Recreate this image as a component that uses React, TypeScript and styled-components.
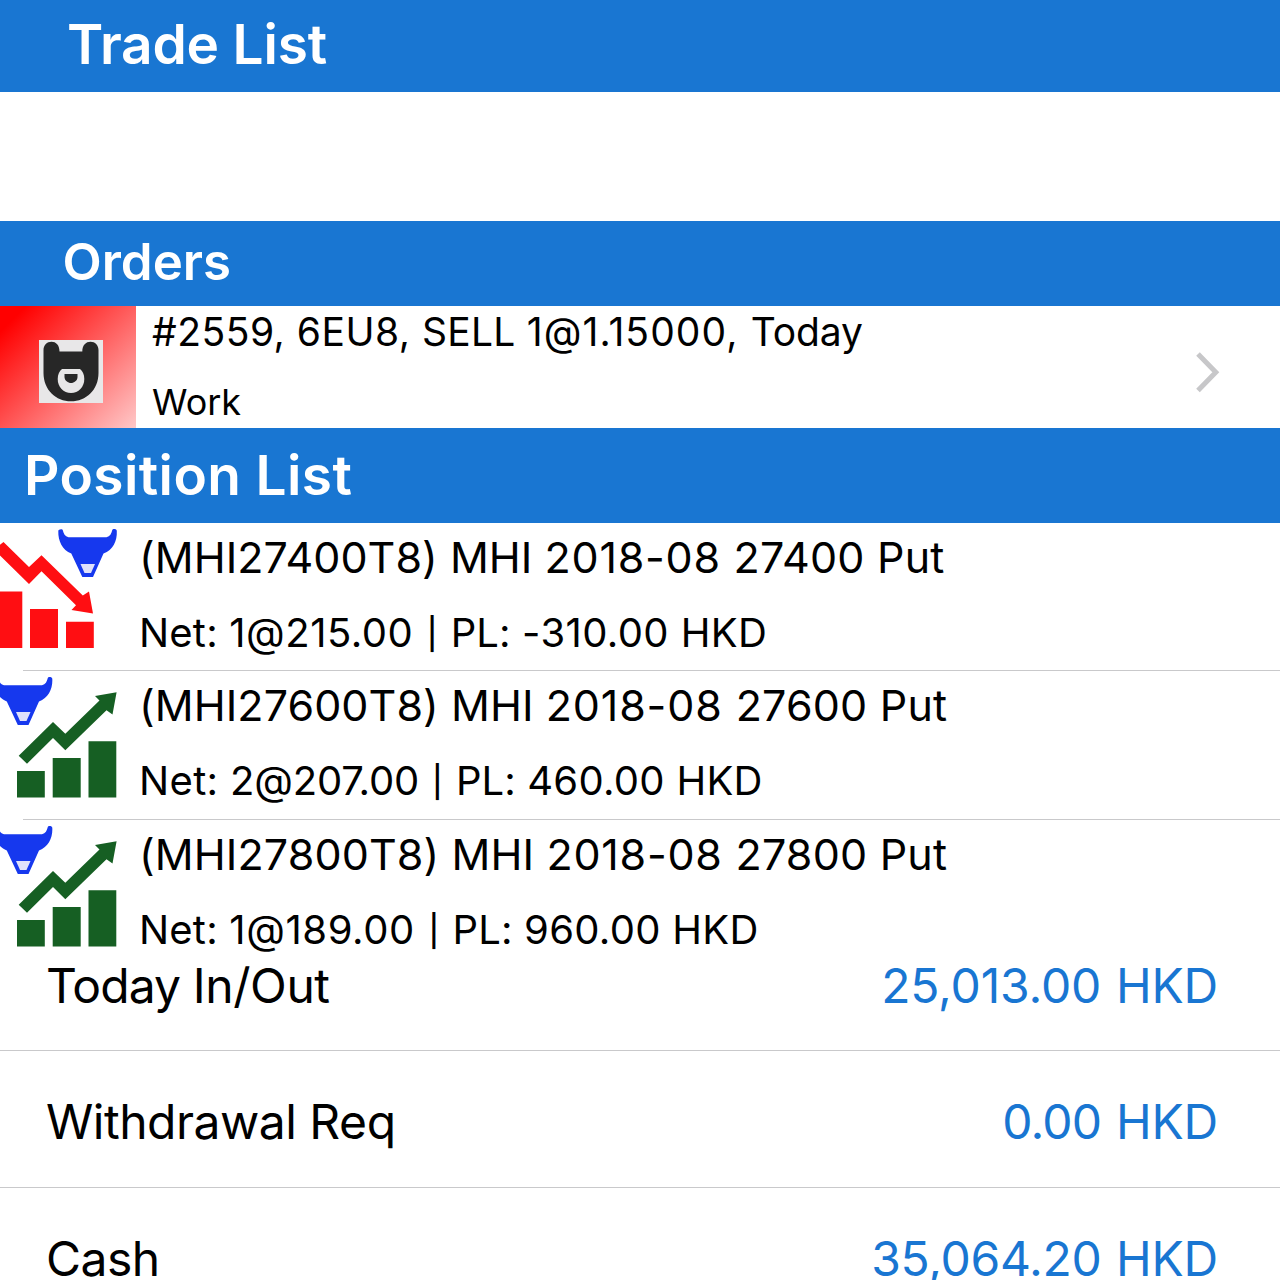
import React from "react";
import styled, { createGlobalStyle } from "styled-components";

const BLUE = "#1976d2";

const GlobalStyle = createGlobalStyle`
  * { box-sizing: border-box; }
  body { margin: 0; background: #fff; overflow: hidden; }
`;

const Screen = styled.main`
  display: flex;
  flex-direction: column;
  width: 1280px;
  height: 1280px;
  overflow: hidden;
  background: #fff;
  color: #000;
  font-family: Inter, "Liberation Sans", sans-serif;
  white-space: nowrap;
`;

const Header = styled.h2<{ $height: number; $left: number; $size: number; $spacing?: number; $lift?: number }>`
  display: flex;
  flex: none;
  align-items: center;
  height: ${(p) => p.$height}px;
  margin: 0;
  padding: 0 0 ${(p) => p.$lift ?? 0}px ${(p) => p.$left}px;
  background: ${BLUE};
  color: #fff;
  font-size: ${(p) => p.$size}px;
  font-weight: 600;
  letter-spacing: ${(p) => p.$spacing ?? 0}px;
`;

const EmptyTrades = styled.section`
  flex: none;
  height: 129px;
`;

const Line = styled.div<{ $size: number; $height: number; $spacing?: number }>`
  font-size: ${(p) => p.$size}px;
  line-height: ${(p) => p.$height}px;
  letter-spacing: ${(p) => p.$spacing ?? 0}px;
`;

const Run = styled.span<{ $spacing: number }>`
  letter-spacing: ${(p) => p.$spacing}px;
`;

const Bar = styled.span`
  display: inline-block;
  width: 14.500px;
  font-size: 31px;
  font-weight: 500;
  line-height: 1;
  text-align: center;
  vertical-align: 2px;
`;

const OrderRow = styled.section`
  display: flex;
  flex: none;
  height: 122px;
`;

const OrderBadge = styled.div`
  flex: none;
  width: 136px;
  padding: 34px 0 0 39px;
  background: linear-gradient(135deg, #ff0000 10%, #ffc8c8 100%);
`;

const OrderBody = styled.div`
  display: flex;
  flex: 1;
  flex-direction: column;
  gap: 18px;
  padding: 0 0 0 16px;
`;

const Chevron = styled.svg`
  flex: none;
  margin: 44px 57px 0 0;
`;

const PositionRow = styled.section<{ $height: number }>`
  display: flex;
  flex: none;
  height: ${(p) => p.$height}px;
`;

const PositionArt = styled.svg`
  flex: none;
  display: block;
`;

const PositionBody = styled.div`
  display: flex;
  flex: 1;
  flex-direction: column;
  gap: 23px;
  padding-top: 8px;
`;

const Divider = styled.hr<{ $inset?: number }>`
  flex: none;
  height: 1px;
  margin: 0 0 0 ${(p) => p.$inset ?? 0}px;
  border: 0;
  background: #c9c9cb;
`;

const CashRow = styled.section<{ $height: number; $top: number }>`
  display: flex;
  flex: none;
  justify-content: space-between;
  height: ${(p) => p.$height}px;
  padding: ${(p) => p.$top}px 62px 0 46px;
`;

const Amount = styled(Line)`
  color: ${BLUE};
`;

const Bull = ({ x }: { x: number }) => (
  <g transform={`translate(${x} 0)`}>
    <path
      d="M.3 8C.2 6 4.500 5.400 4.800 7.200C5.500 10.500 7 13.200 10.500 14.300H48.500C52 13.200 53.500 10.500 54.200 7.200C54.500 5.400 58.800 5.800 58.800 8C59.300 18 55 27 45.500 30.500L35 54H24.300L13.300 30.500C4.300 27 0 18 .3 8Z"
      fill="#1638ee"
    />
    <path d="M22.500 41H37L33 50H26.500Z" fill="#dfe1fb" />
  </g>
);

const LossArt = () => (
  <PositionArt width="139" height="147" viewBox="0 0 139 147" aria-hidden>
    <g fill="#ff0e12">
      <path d="M0 68.500H22.300V125H0ZM30 86H58V125H30ZM66 98.700H93.800V125H66Z" />
      <path d="M-2 23.500L3.500 19L29 44L41.500 32.200L82.800 72.500L89 68.500L93 90.500L71.500 87L76 82.300L41.500 48.300L29 61L-2 30.500Z" />
    </g>
    <Bull x={58} />
  </PositionArt>
);

const GainArt = () => (
  <PositionArt width="139" height="134" viewBox="0 0 139 134" aria-hidden>
    <g fill="#165f23">
      <path d="M17 100H44.800V126.500H17ZM52.700 87H80.700V126.500H52.700ZM88.500 70.300H116.300V126.500H88.500Z" />
      <path d="M18.700 84.700L53 51L65.300 62.800L99.500 29.500L95 25L116.600 21.300L112.500 43.500L106.500 39.300L65.300 79.300L53 67L27 92.700Z" />
    </g>
    <Bull x={-6.500} />
  </PositionArt>
);

const BearIcon = () => (
  <svg width="64" height="63" viewBox="0 0 64 63" aria-hidden>
    <path d="M0 0H64V63H0Z" fill="#e8e7e8" />
    <path
      d="M4.500 10C4.500 5 8 1.700 12.500 1.700C17 1.700 20.500 5 20.500 11.500H43.300C43.300 5 47 1.700 51.500 1.700C56 1.700 59.500 5 59.500 10V33C59.500 50 47 61.300 32 61.300S4.500 50 4.500 33Z"
      fill="#272727"
    />
    <path d="M23 29H41C43.500 31 45.300 34.500 45.300 39C45.300 47 39.500 53 32 53S18.700 47 18.700 39C18.700 34.500 20.500 31 23 29Z" fill="#e8e7e8" />
    <path d="M25.500 34H38.500V37C38.500 40.500 35 43 32 43S25.500 40.500 25.500 37Z" fill="#272727" />
  </svg>
);

type TextRun = [text: string, spacing: number];

const Runs = ({ runs }: { runs: TextRun[] }) => (
  <>
    {runs.map(([text, spacing], i) =>
      text === "|" ? <Bar key={i}>|</Bar> : <Run key={i} $spacing={spacing}>{text}</Run>,
    )}
  </>
);

const order: TextRun[] = [["#2559, ", 0.5], ["6EU8, ", 0.5], ["SELL ", 0.25], ["1@1.15000, ", 1.1], ["Today", -0.1]];

const positions: { title: TextRun[]; detail: TextRun[]; gain: boolean }[] = [
  {
    title: [["(MHI27400T8) MHI ", 0.05], ["2018-08 ", 0.75], ["27400 ", 0.2], ["Put", 0.2]],
    detail: [["Net: ", 0.2], ["1@215.00 ", 0.5], ["|", 0], [" PL: ", 0.1], ["-310.00 ", 0.4], ["HKD", 0.4]],
    gain: false,
  },
  {
    title: [["(MHI27600T8) MHI ", 0.08], ["2018-08 ", 0.85], ["27600 ", 0.2], ["Put", 0.2]],
    detail: [["Net: ", 0.35], ["2@207.00 ", -0.2], ["|", 0], [" PL: ", 0.1], ["460.00 ", 0.3], ["HKD", 0.3]],
    gain: true,
  },
  {
    title: [["(MHI27800T8) MHI ", 0.12], ["2018-08 ", 0.75], ["27800 ", 0.2], ["Put", 0.2]],
    detail: [["Net: ", 0.2], ["1@189.00 ", 0.6], ["|", 0], [" PL: ", 0.15], ["960.00 ", 0.3], ["HKD", 0.3]],
    gain: true,
  },
];

const balances: { label: TextRun[]; amount: TextRun[] }[] = [
  { label: [["Today ", -0.9], ["In/Out", -0.4]], amount: [["25,013.00", -0.15], [" ", 1.3], ["HKD", -0.2]] },
  { label: [["Withdrawal ", -0.5], ["Req", -0.4]], amount: [["0.00", -0.8], [" ", 1.3], ["HKD", -0.2]] },
  { label: [["Cash", -0.5]], amount: [["35,064.20", -0.3], [" ", 1], ["HKD", -0.2]] },
];

export default function App() {
  return (
    <>
      <GlobalStyle />
      <Screen>
        <Header $height={92} $left={67} $size={55} $spacing={-0.2} $lift={5}>Trade List</Header>
        <EmptyTrades />
        <Header $height={85} $left={62.500} $size={51} $lift={4}>Orders</Header>
        <OrderRow>
          <OrderBadge><BearIcon /></OrderBadge>
          <OrderBody>
            <Line $size={39} $height={52}><Runs runs={order} /></Line>
            <Line $size={36} $height={52}>Work</Line>
          </OrderBody>
          <Chevron width="30" height="46" viewBox="0 0 30 46" aria-hidden>
            <path d="M5 4L22.800 22.300L5 40.600" fill="none" stroke="#c7c7c9" strokeWidth="5" />
          </Chevron>
        </OrderRow>
        <Header $height={95} $left={24} $size={55} $spacing={0.4} $lift={2}>Position List</Header>
        {positions.map((p, i) => (
          <React.Fragment key={i}>
            {i > 0 && <Divider $inset={23} />}
            <PositionRow $height={i === 2 ? 134 : i === 1 ? 148 : 147}>
              {p.gain ? <GainArt /> : <LossArt />}
              <PositionBody>
                <Line $size={43} $height={53}><Runs runs={p.title} /></Line>
                <Line $size={40} $height={52}><Runs runs={p.detail} /></Line>
              </PositionBody>
            </PositionRow>
          </React.Fragment>
        ))}
        {balances.map((b, i) => (
          <React.Fragment key={i}>
            {i > 0 && <Divider />}
            <CashRow $height={i === 0 ? 96 : 136} $top={i === 0 ? 2 : 41}>
              <Line $size={48} $height={60}><Runs runs={b.label} /></Line>
              <Amount $size={48} $height={60}><Runs runs={b.amount} /></Amount>
            </CashRow>
          </React.Fragment>
        ))}
      </Screen>
    </>
  );
}
